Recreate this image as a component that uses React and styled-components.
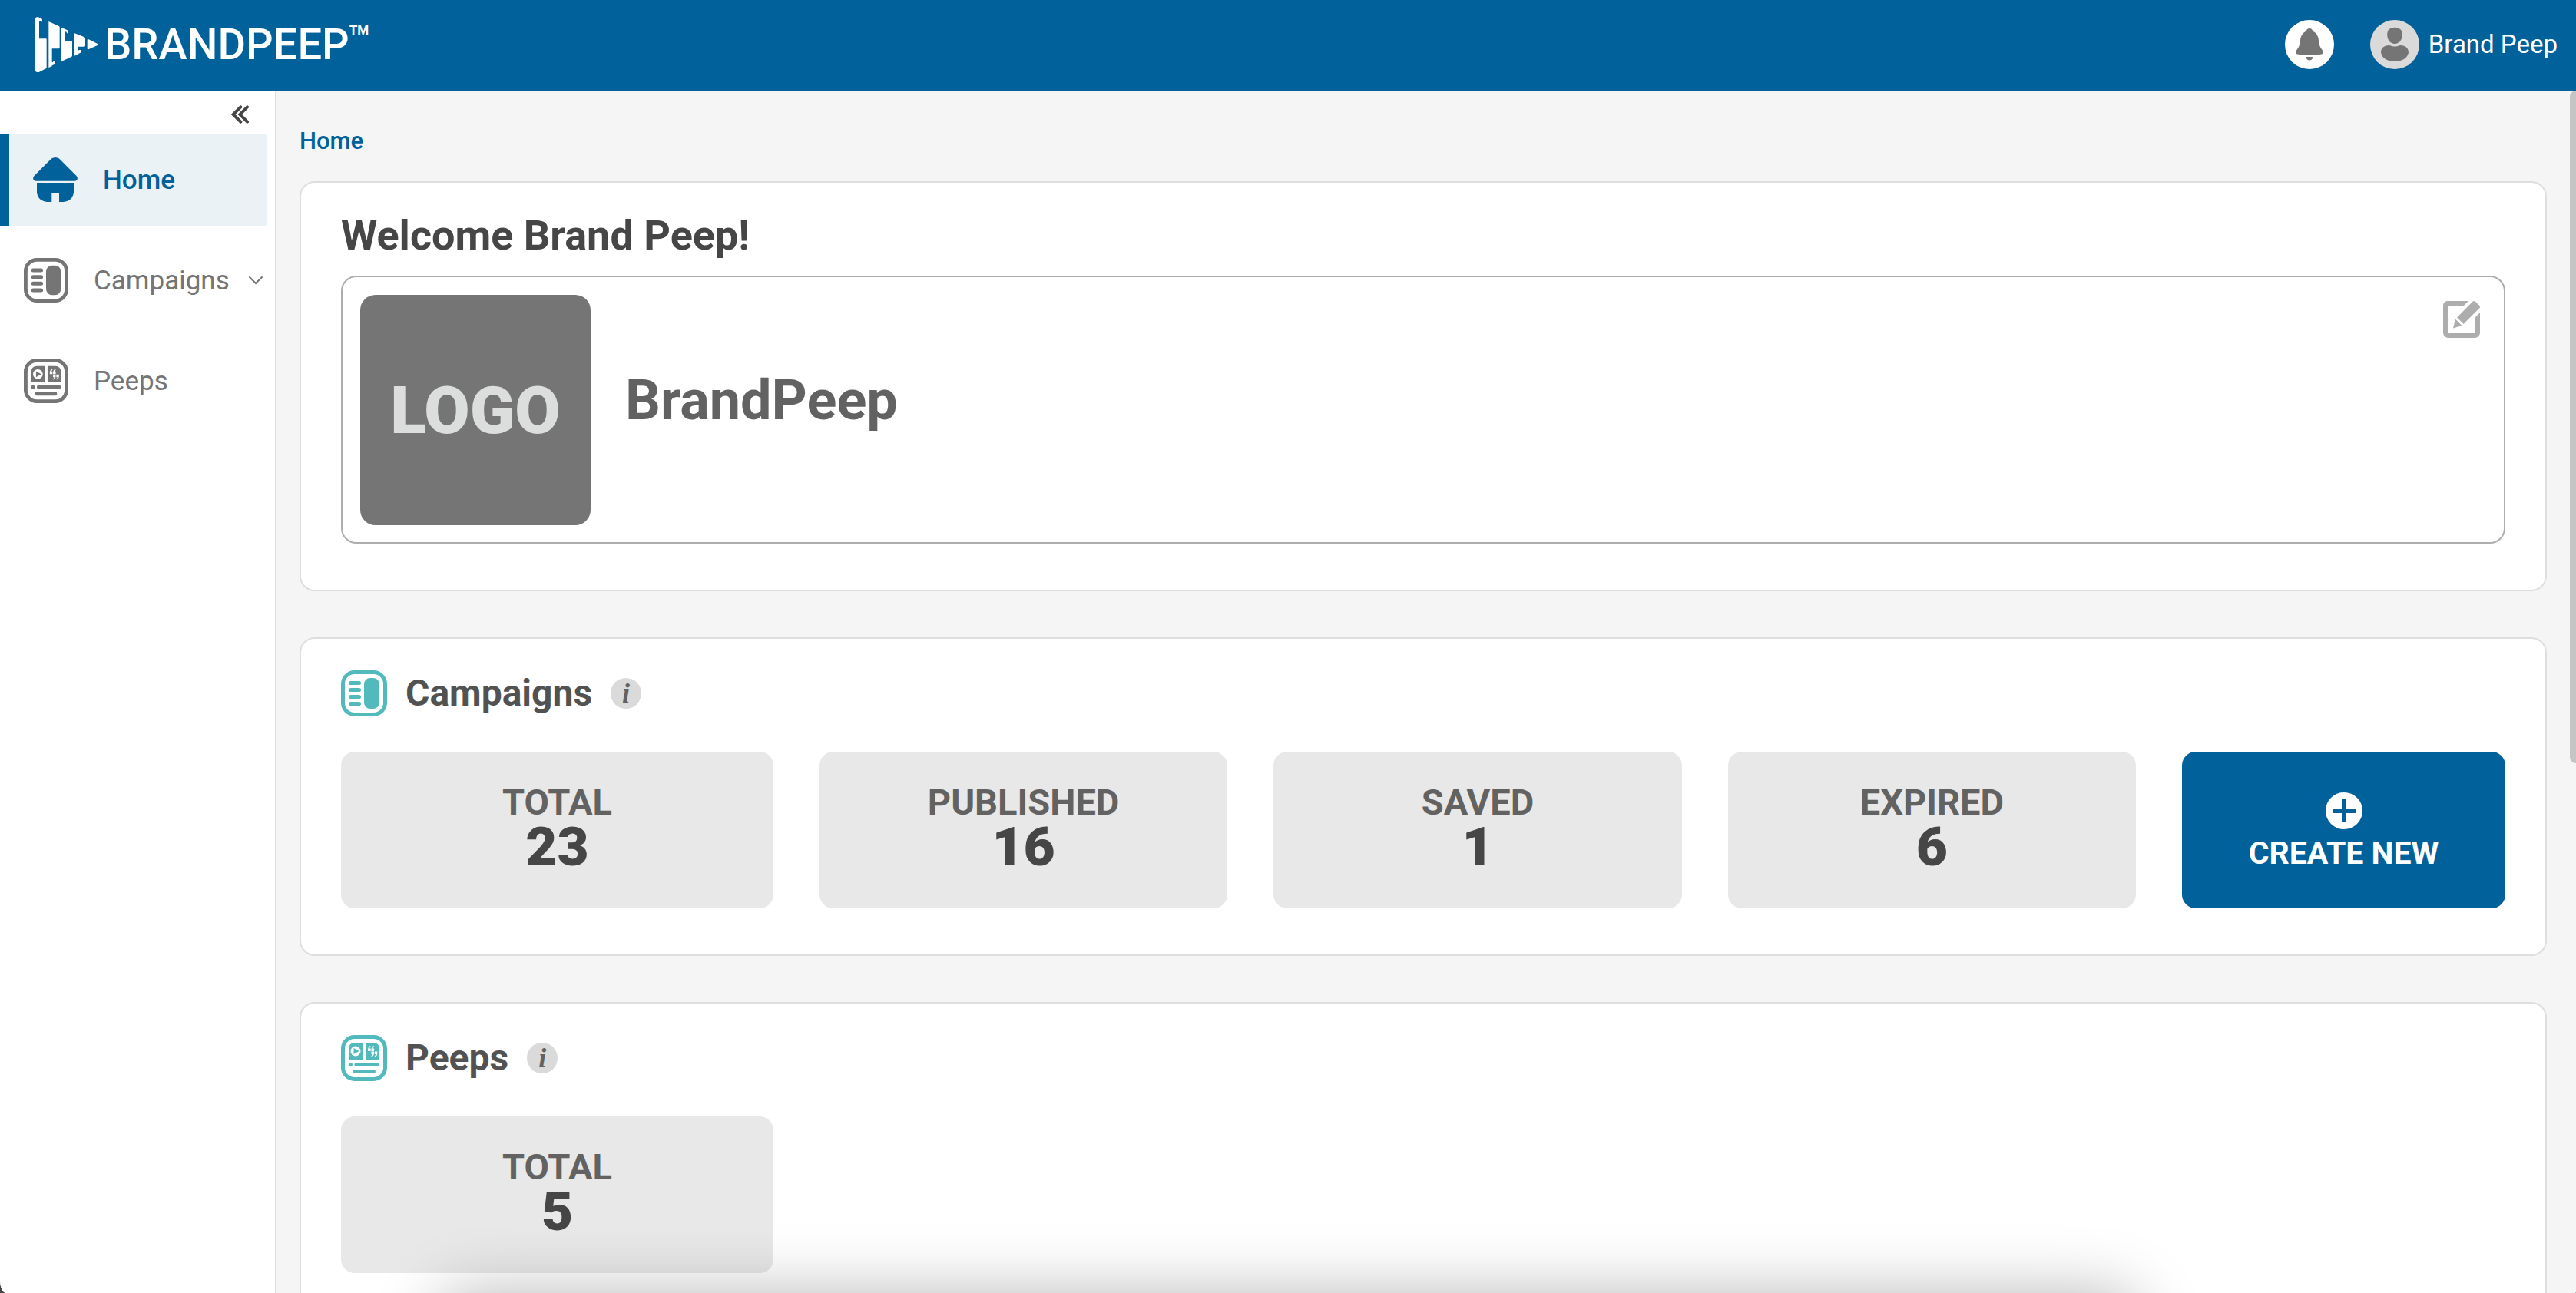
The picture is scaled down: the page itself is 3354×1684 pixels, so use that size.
import React, { useState } from 'react';
import styled, { createGlobalStyle } from 'styled-components';

const GlobalStyle = createGlobalStyle`
  * {
    box-sizing: border-box;
    margin: 0;
    padding: 0;
  }
  body {
    background-color: #464646;
    font-family: Roboto, 'Liberation Sans', sans-serif;
    color: #464646;
  }
  button {
    border: 0;
    background: none;
    font-family: inherit;
    color: inherit;
    cursor: pointer;
  }
  a {
    color: inherit;
    text-decoration: none;
  }
  ul {
    list-style: none;
  }
  svg {
    display: block;
    flex-shrink: 0;
  }
`;

const Layout = styled.div`
  display: flex;
  flex-direction: column;
  height: 100vh;
  position: relative;
  overflow: hidden;
  background-color: #fff;
  border-radius: 0 0 2px 8px / 0 0 2px 16px;
`;

const Header = styled.header`
  display: flex;
  justify-content: space-between;
  align-items: center;
  flex-shrink: 0;
  height: 118px;
  padding: 0 24px 2px 46px;
  background-color: #00619b;
  color: #fff;
  .right {
    display: flex;
    align-items: center;
    gap: 47px;
  }
`;

const Brand = styled.a`
  display: flex;
  align-items: center;
  gap: 8px;
  font-size: 56px;
  line-height: 74px;
  font-weight: 500;
  span {
    display: flex;
    align-items: flex-start;
  }
  sup {
    font-size: 17px;
    line-height: 36px;
    font-weight: 700;
  }
`;

const BellButton = styled.button`
  border-radius: 50%;
`;

const UserButton = styled.button`
  display: flex;
  align-items: center;
  gap: 12px;
  font-size: 33px;
  line-height: 40px;
`;

const Body = styled.div`
  display: flex;
  flex: 1;
  min-height: 0;
`;

const Sidebar = styled.aside`
  flex-shrink: 0;
  width: 360px;
  border-right: 2px solid #dedede;
  background-color: #fff;
  ul {
    display: flex;
    flex-direction: column;
    gap: 11px;
    padding-right: 11px;
  }
`;

const CollapseBar = styled.div`
  display: flex;
  justify-content: flex-end;
  align-items: center;
  height: 56px;
  padding: 6px 33px 0 0;
`;

const NavLink = styled.a`
  display: flex;
  align-items: center;
  height: 120px;
  padding: 0 4px 0 31px;
  font-size: 35px;
  color: #757575;
  span {
    margin-left: 33px;
  }
  .arrow {
    margin-left: auto;
  }
  &.active {
    border-left: 12px solid #00619b;
    background-color: #eaf2f5;
    font-weight: 500;
    color: #00619b;
  }
`;

const Main = styled.main`
  display: flex;
  flex-direction: column;
  flex: 1;
  min-width: 0;
  overflow: hidden;
  padding: 46px 38px 0 30px;
  background-color: #f5f5f5;
`;

const Breadcrumb = styled.nav`
  margin-bottom: 32px;
  font-size: 31px;
  line-height: 40px;
  font-weight: 500;
  color: #00619b;
`;

const Card = styled.section`
  flex-shrink: 0;
  margin-bottom: 60px;
  padding: 41px 52px 60px;
  border: 2px solid #dedede;
  border-radius: 20px;
  background-color: #fff;
`;

const Welcome = styled.h1`
  margin-bottom: 24px;
  font-size: 54px;
  line-height: 56px;
  font-weight: 700;
`;

const Profile = styled.div`
  display: flex;
  align-items: center;
  gap: 45px;
  position: relative;
  padding: 23px 23px 22px;
  border: 2px solid #adadad;
  border-radius: 20px;
  h2 {
    padding-bottom: 24px;
    font-size: 72px;
    line-height: 84px;
    font-weight: 700;
    color: #626262;
  }
`;

const LogoBox = styled.div`
  display: flex;
  justify-content: center;
  align-items: center;
  width: 300px;
  height: 300px;
  border-radius: 20px;
  background-color: #757575;
  font-size: 86px;
  font-weight: 900;
  color: #dcdddd;
`;

const EditButton = styled.button`
  position: absolute;
  top: 31px;
  right: 31px;
  color: #adadad;
`;

const CardTitle = styled.div`
  display: flex;
  align-items: center;
  height: 60px;
  margin-bottom: 46px;
  color: #52babc;
  h2 {
    margin: 0 24px;
    font-size: 48px;
    line-height: 56px;
    font-weight: 700;
    color: #525252;
  }
`;

const InfoButton = styled.button`
  width: 40px;
  height: 40px;
  border-radius: 50%;
  background-color: #dadada;
  font-family: 'Liberation Serif', serif;
  font-size: 36px;
  line-height: 40px;
  font-style: italic;
  font-weight: 700;
  color: #626262;
`;

const Stats = styled.div`
  display: grid;
  grid-template-columns: 107fr repeat(3, 101fr) 80fr;
  gap: 60px;
`;

const Stat = styled.div`
  display: flex;
  flex-direction: column;
  justify-content: center;
  align-items: center;
  height: 204px;
  border-radius: 18px;
  background-color: #e8e8e8;
  h3 {
    font-size: 47px;
    line-height: 44px;
    font-weight: 700;
    color: #626262;
  }
  p {
    font-size: 71px;
    line-height: 72px;
    font-weight: 900;
  }
`;

const CreateButton = styled.button`
  display: flex;
  flex-direction: column;
  justify-content: center;
  align-items: center;
  gap: 11px;
  border-radius: 18px;
  background-color: #00619b;
  font-size: 41px;
  line-height: 40px;
  font-weight: 700;
  color: #fff;
`;

const ScrollThumb = styled.div`
  position: absolute;
  top: 118px;
  right: 0;
  width: 8px;
  height: 52%;
  border-radius: 8px 0 0 8px;
  background-color: #c4c5c7;
`;

const BottomShadow = styled.div`
  position: absolute;
  top: 100%;
  left: 17%;
  right: 17%;
  height: 160px;
  border-radius: 40px;
  box-shadow: 0 0 84px rgba(0, 0, 0, 0.28);
  pointer-events: none;
`;

function BrandMark() {
  return (
    <svg width="82" height="72" viewBox="138 66 246 216" fill="#fff">
      <path d="M138 72q2-6 10-6l13 6q4 2 4 5v7l-4 2-4-5-4 1v69h27q2 0 2 2v113l-30 16q-12 2-14-6z" />
      <path d="M190 84l39 17q4 2 4 5v81q0 3-3 3h-26q-1 0-1 2v52q4 0 5-4l6-2 1 1v9q0 3-3 4l-9 4v3l-13 5z" />
      <path d="M240 107l23 11q3 1 3 4v8h-5q0-7-6-6-2 0-2 4v32h27q2 0 2 3v55q0 2-2 3l-40 19z" />
      <path d="M290 129l38 15q5 2 5 6v28q0 4-4 4h-26v15q5 0 6-2h6v10q0 2-4 3l-5 2-2 3-14 5z" />
      <path d="M341 156q0-4 4-3l36 18q5 3 0 6l-36 16q-4 1-4-3z" />
    </svg>
  );
}

function BellIcon() {
  return (
    <svg width="64" height="64" viewBox="0 0 64 64">
      <circle cx="32" cy="32" r="32" fill="#fff" />
      <g fill="#757575">
        <path d="M32 11c2.500 0 3.800 1.500 4.200 3.400C41 16.500 43.600 21 44 26.500c.4 6.500 1.800 8.800 5 13 1.600 2.300 1.200 4.300-1 5-8 1.900-24 1.900-32 0-2.200-.7-2.600-2.700-1-5 3.200-4.200 4.600-6.500 5-13 .4-5.500 3-10 7.800-12.100.4-1.900 1.700-3.400 4.200-3.400z" />
        <path d="M27 48h10c-1 3-3 4.600-5 4.600s-4-1.600-5-4.600z" />
      </g>
    </svg>
  );
}

function UserIcon() {
  return (
    <svg width="64" height="64" viewBox="0 0 64 64">
      <circle cx="32" cy="32" r="32" fill="#dadada" />
      <g fill="#757575">
        <path d="M32 9.700c6.500 0 9.800 3.600 9.800 9.300 0 7-4 12-9.800 12s-9.800-5-9.800-12c0-5.700 3.300-9.300 9.800-9.300z" />
        <path d="M26 33.200c4 1.800 8 1.800 12 0 7-.8 12 3 12 9C49 49.500 41 54 32 54s-17-4.500-18-11.800c0-6 5-9.800 12-9z" />
      </g>
    </svg>
  );
}

function CollapseIcon() {
  return (
    <svg
      width="24"
      height="24"
      viewBox="0 0 72 72"
      fill="none"
      stroke="#464646"
      strokeWidth="12"
      strokeLinecap="round"
    >
      <path d="M37 7L8 36l29 29M63 7L34 36l29 29" />
    </svg>
  );
}

function HomeIcon() {
  return (
    <svg width="58" height="58" viewBox="0 0 58 58" fill="currentColor">
      <path d="M24 1.500q5-3 10 0L56.500 24q2.500 3 .5 5.500-.8 1.200-3 1.200H4q-2.200 0-3-1.200Q-1 27 1.500 24z" />
      <path d="M5 33h48v13q-2 11-13 12h-6V46.500h-9.700V58H18Q7 57 5 46z" />
    </svg>
  );
}

function CampaignsIcon({ size }) {
  return (
    <svg width={size} height={size} viewBox="0 0 60 60">
      <rect x="2.500" y="2.500" width="55" height="55" rx="15" fill="none" stroke="currentColor" strokeWidth="5" />
      <path
        d="M12.600 16.500h10.800M12.600 25.500h10.800M12.600 34.500h10.800M12.600 43.500h10.800"
        stroke="currentColor"
        strokeWidth="5.200"
        strokeLinecap="round"
      />
      <rect x="30" y="10" width="20" height="40" rx="8" fill="currentColor" />
    </svg>
  );
}

function PeepsIcon({ size }) {
  return (
    <svg width={size} height={size} viewBox="0 0 60 60">
      <rect x="2.500" y="2.500" width="55" height="55" rx="15" fill="none" stroke="currentColor" strokeWidth="5" />
      <path d="M18 10h10v22H10V18q0-8 8-8zM32 10h10q8 0 8 8v14H32z" fill="currentColor" />
      <circle cx="19" cy="21" r="6.500" fill="#fff" />
      <path d="M16.500 17l7 4-7 4z" fill="currentColor" />
      <g fill="#fff">
        <path d="M38.500 14q-3.500 1-3.500 5.500v1.500h3.600v-3.600H37q.2-1.600 1.500-2zM42.900 14q-3.500 1-3.500 5.500v1.500H43v-3.600h-1.600q.2-1.600 1.500-2z" />
        <path d="M39.500 28.500q3.500-1 3.500-5.500v-1.500h-3.600v3.600H41q-.2 1.600-1.500 2zM43.900 28.500q3.500-1 3.500-5.500v-1.500h-3.600v3.600h1.600q-.2 1.600-1.500 2z" />
      </g>
      <circle cx="12.400" cy="38.500" r="2.500" fill="currentColor" />
      <path d="M20 38.500h27.500M17.600 47.500h24.800" stroke="currentColor" strokeWidth="5" strokeLinecap="round" />
    </svg>
  );
}

function ArrowIcon() {
  return (
    <svg className="arrow" width="20" height="12" viewBox="0 0 20 12" fill="none" stroke="#757575" strokeWidth="2">
      <path d="M2 2l8 8 8-8" strokeLinecap="round" />
    </svg>
  );
}

function EditIcon() {
  return (
    <svg width="48" height="48" viewBox="0 0 48 48" fill="currentColor">
      <path d="M5 0h28l-6 6H6v36h36V21l6-6v27q-1 5-6 6H6q-5-1-6-6V5q1-4 5-5z" />
      <path d="M38.500.700q2-1.400 3.500 0l5.300 5.300q1.400 1.700 0 3.300L26.500 30 18 21.500z" />
      <path d="M16 23.500l8.500 8.500L13 35.500z" />
    </svg>
  );
}

function PlusIcon() {
  return (
    <svg width="48" height="48" viewBox="0 0 48 48">
      <circle cx="24" cy="24" r="24" fill="#fff" />
      <path d="M9 24h30M24 9v30" stroke="#00619b" strokeWidth="6" />
    </svg>
  );
}

const campaignStats = [
  { label: 'TOTAL', value: 23 },
  { label: 'PUBLISHED', value: 16 },
  { label: 'SAVED', value: 1 },
  { label: 'EXPIRED', value: 6 },
];

const peepStats = [{ label: 'TOTAL', value: 5 }];

function StatList({ stats, children }) {
  return (
    <Stats>
      {stats.map(stat => (
        <Stat key={stat.label}>
          <h3>{stat.label}</h3>
          <p>{stat.value}</p>
        </Stat>
      ))}
      {children}
    </Stats>
  );
}

function App() {
  const [page, setPage] = useState('home');

  const handleNav = name => e => {
    e.preventDefault();
    setPage(name);
  };

  return (
    <>
      <GlobalStyle />
      <Layout>
        <Header>
          <Brand href="#home">
            <BrandMark />
            <span>
              BRANDPEEP<sup>TM</sup>
            </span>
          </Brand>
          <div className="right">
            <BellButton aria-label="Notifications">
              <BellIcon />
            </BellButton>
            <UserButton>
              <UserIcon />
              Brand Peep
            </UserButton>
          </div>
        </Header>
        <Body>
          <Sidebar>
            <CollapseBar>
              <button aria-label="Collapse menu">
                <CollapseIcon />
              </button>
            </CollapseBar>
            <ul>
              <li>
                <NavLink href="#home" className={page === 'home' ? 'active' : ''} onClick={handleNav('home')}>
                  <HomeIcon />
                  <span>Home</span>
                </NavLink>
              </li>
              <li>
                <NavLink
                  href="#campaigns"
                  className={page === 'campaigns' ? 'active' : ''}
                  onClick={handleNav('campaigns')}
                >
                  <CampaignsIcon size={58} />
                  <span>Campaigns</span>
                  <ArrowIcon />
                </NavLink>
              </li>
              <li>
                <NavLink href="#peeps" className={page === 'peeps' ? 'active' : ''} onClick={handleNav('peeps')}>
                  <PeepsIcon size={58} />
                  <span>Peeps</span>
                </NavLink>
              </li>
            </ul>
          </Sidebar>
          <Main>
            <Breadcrumb>
              <a href="#home">Home</a>
            </Breadcrumb>
            <Card>
              <Welcome>Welcome Brand Peep!</Welcome>
              <Profile>
                <LogoBox>LOGO</LogoBox>
                <h2>BrandPeep</h2>
                <EditButton aria-label="Edit brand">
                  <EditIcon />
                </EditButton>
              </Profile>
            </Card>
            <Card>
              <CardTitle>
                <CampaignsIcon size={60} />
                <h2>Campaigns</h2>
                <InfoButton aria-label="About campaigns">i</InfoButton>
              </CardTitle>
              <StatList stats={campaignStats}>
                <CreateButton>
                  <PlusIcon />
                  CREATE NEW
                </CreateButton>
              </StatList>
            </Card>
            <Card>
              <CardTitle>
                <PeepsIcon size={60} />
                <h2>Peeps</h2>
                <InfoButton aria-label="About peeps">i</InfoButton>
              </CardTitle>
              <StatList stats={peepStats} />
            </Card>
          </Main>
        </Body>
        <ScrollThumb />
        <BottomShadow />
      </Layout>
    </>
  );
}

export default App;
